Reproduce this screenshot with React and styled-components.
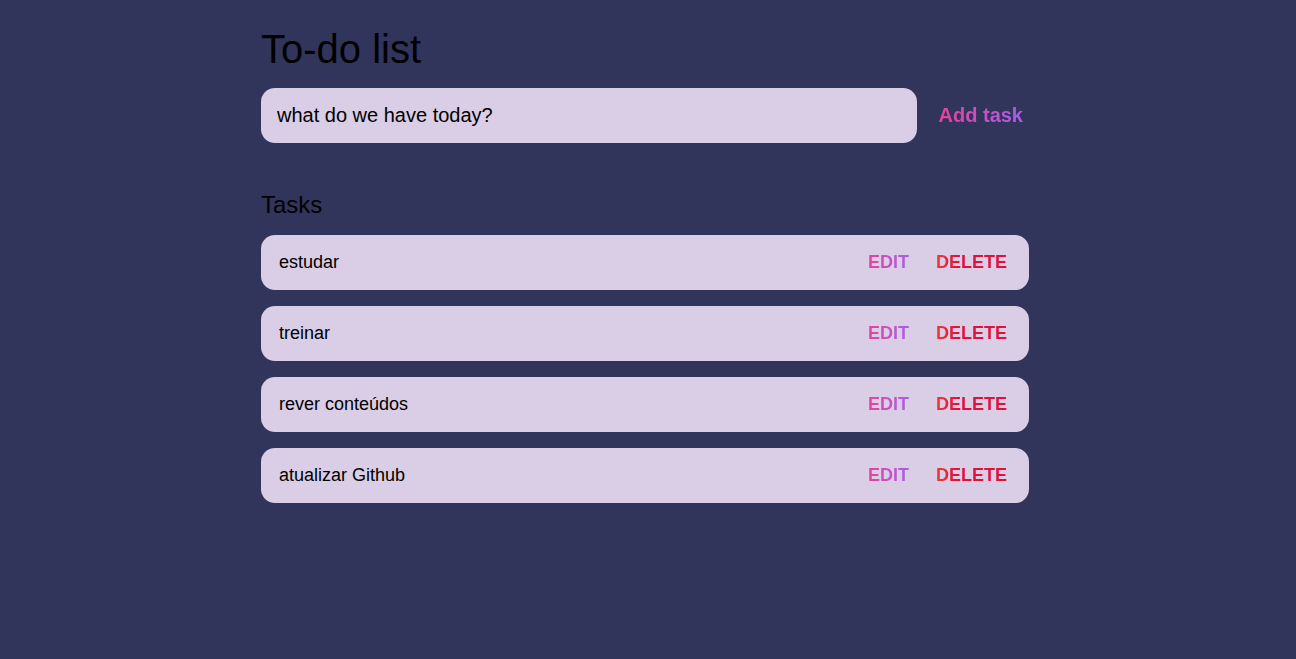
import React, { useState } from "react";
import styled, { createGlobalStyle } from "styled-components";

const GlobalStyle = createGlobalStyle`
  * {
    box-sizing: border-box;
  }
  body {
    margin: 0;
    background: #31355c;
    font-family: "Liberation Sans", Arial, sans-serif;
    color: #000;
  }
`;

const Page = styled.main`
  width: 768px;
  margin-left: calc(50% - 387px);
  padding-top: 26px;
`;

const Title = styled.h1`
  margin: 0;
  font-size: 40px;
  font-weight: 400;
  line-height: 46px;
`;

const Form = styled.form`
  display: flex;
  align-items: center;
  gap: 22px;
  margin-top: 16px;
`;

const Input = styled.input`
  flex: 1;
  height: 55px;
  padding: 0 16px;
  border: none;
  border-radius: 14px;
  background: #dacde6;
  font-family: inherit;
  font-size: 20px;
  color: #000;
  outline: none;

  &::placeholder {
    color: #000;
  }
`;

const GradientText = styled.button`
  border: none;
  background: ${(p) => p.$gradient};
  -webkit-background-clip: text;
  background-clip: text;
  color: transparent;
  font-family: inherit;
  font-weight: 700;
  cursor: pointer;
  padding: 0;
`;

const AddButton = styled(GradientText)`
  font-size: 20px;
  margin-right: 6px;
`;

const Heading = styled.h2`
  margin: 48px 0 17px;
  font-size: 24px;
  font-weight: 400;
  line-height: 27px;
`;

const List = styled.ul`
  list-style: none;
  margin: 0;
  padding: 0;
  display: flex;
  flex-direction: column;
  gap: 16px;
`;

const Row = styled.li`
  display: flex;
  align-items: center;
  height: 55px;
  padding: 0 22px 0 18px;
  border-radius: 14px;
  background: #dacde6;
`;

const RowText = styled.span`
  flex: 1;
  font-size: 18px;
`;

const Actions = styled.div`
  display: flex;
  gap: 27px;
`;

const ActionButton = styled(GradientText)`
  font-size: 18px;
  text-transform: uppercase;
`;

const pink = "linear-gradient(90deg, #e5449a, #a85ee8)";
const red = "linear-gradient(90deg, #ef3a2f, #e0113d 30%, #e0113d)";

const initial = ["estudar", "treinar", "rever conteúdos", "atualizar Github"];

const App = () => {
  const [tasks, setTasks] = useState(initial);
  const [text, setText] = useState("");

  const handleAdd = (e) => {
    e.preventDefault();
    if (text === "") return;
    setTasks([...tasks, text]);
    setText("");
  };

  const handleDelete = (idx) => {
    setTasks(tasks.filter((_, i) => i !== idx));
  };

  return (
    <>
      <GlobalStyle />
      <Page>
        <Title>To-do list</Title>
        <Form onSubmit={handleAdd}>
          <Input
            placeholder="what do we have today?"
            value={text}
            onChange={(e) => setText(e.target.value)}
          />
          <AddButton type="submit" $gradient={pink}>
            Add task
          </AddButton>
        </Form>

        <Heading>Tasks</Heading>
        <List>
          {tasks.map((task, idx) => (
            <Row key={idx}>
              <RowText>{task}</RowText>
              <Actions>
                <ActionButton $gradient={pink}>Edit</ActionButton>
                <ActionButton
                  $gradient={red}
                  onClick={() => handleDelete(idx)}
                >
                  Delete
                </ActionButton>
              </Actions>
            </Row>
          ))}
        </List>
      </Page>
    </>
  );
};

export default App;
